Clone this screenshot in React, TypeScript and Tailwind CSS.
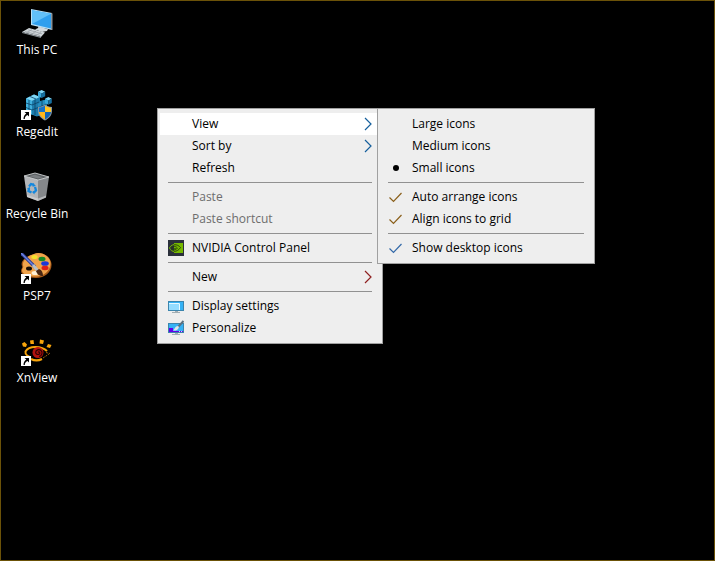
import type { ReactNode } from 'react';

function ShortcutArrow() {
  return (
    <g>
      <rect x="0" y="21" width="10" height="10" fill="#fff" />
      <path d="M3.500 23H8v4.500l-1.500-1.500c-2 1-2.700 2-2.700 4H2.500c0-2.500 1-4.300 2.800-5.500z" fill="#000" />
    </g>
  );
}

function ThisPcIcon() {
  return (
    <svg viewBox="0 0 32 32" className="size-8" aria-hidden="true">
      <path d="M17 19l6 1.500v2l-6-1z" fill="#9aa5ad" />
      <path d="M14 22.500l5-2.500 8 2-1 2-5 1z" fill="#d3d9dd" />
      <path d="M10 2l21 4v17L10 18z" fill="#b9dff5" />
      <path d="M11 3.200l19 3.600v14.800L11 17z" fill="#2f9fee" />
      <path d="M11 3.200l19 3.600-19 10.200z" fill="#62c0f8" />
      <path d="M30 6l1.500.5v16.500l-1.500-.3z" fill="#8a9298" />
      <path d="M1 25l7-4 16 4.500-4 4.500z" fill="#cfd5d9" />
      <path d="M4 24.500l15 4M7 22.800l14 4M5 26l6-3.500M10 27.300l5-3M15 28.500l5-3" stroke="#8e969c" strokeWidth=".6" />
      <path d="M1 25v1l19 5v-1z" fill="#858d93" />
    </svg>
  );
}

function Cube({ x, y, s }: { x: number; y: number; s: number }) {
  return (
    <g transform={`translate(${x} ${y}) scale(${s})`}>
      <path d="M0 2l4-2 4 2-4 2z" fill="#7fd6f4" />
      <path d="M0 2l4 2v5l-4-2z" fill="#38a9dc" />
      <path d="M8 2l-4 2v5l4-2z" fill="#156f9f" />
    </g>
  );
}

function RegeditIcon() {
  return (
    <svg viewBox="0 0 32 32" className="size-8" aria-hidden="true">
      <path d="M5 9.500l8-4 6 2.500v4l7-1.500v12l-10 5-11-4z" fill="#1b86b8" />
      <path d="M5 9.500l8-4 6 2.500-8 4z" fill="#7fd6f4" />
      <path d="M5 9.500l6 2.500v13.500l-6-2z" fill="#3fb0de" />
      <path d="M11 12l8-4v6l-2 1v12l-6-1.500z" fill="#1d7cac" />
      <path d="M17 15l4-3 5-2v13l-9 4z" fill="#258fc2" />
      <path d="M5 14l6 2 7-3M5 18.500l6 2.500 15-6M8 11v13M14 10.500V26M21 12v13M9 7.500l6 2.500" fill="none" stroke="#0b4366" strokeWidth=".8" />
      <Cube x={17} y={1} s={0.9} />
      <Cube x={24} y={8} s={0.85} />
      <path d="M24 15.500c-2 1.500-4 2.200-7 2.500v4c0 4.500 3 7.500 7 9.500 4-2 7-5 7-9.500v-4c-3-.3-5-1-7-2.500z" fill="#8795a0" />
      <path d="M24 16.800c-2 1-3.500 1.700-6 2V23h6z" fill="#1673c9" />
      <path d="M24 16.800c2 1 3.500 1.700 6 2V23h-6z" fill="#ffc526" />
      <path d="M18 23h6v7.400c-3.300-1.700-5.700-4-6-7.400z" fill="#ffb71b" />
      <path d="M30 23h-6v7.400c3.300-1.700 5.700-4 6-7.400z" fill="#1264b5" />
      <ShortcutArrow />
    </svg>
  );
}

function RecycleBinIcon() {
  return (
    <svg viewBox="0 0 32 32" className="size-8" aria-hidden="true">
      <path d="M3 5l14 3.500v21.500l-11-4z" fill="#b4b6b9" />
      <path d="M28 6l-11 2.500v21.500l8-3.500z" fill="#85888b" />
      <path d="M6 24l11 3.500 8-3v2L17 30 6 26z" fill="#d5d7d9" opacity=".6" />
      <path d="M3 5l11-3 14 4-11 3z" fill="#5d6164" stroke="#cfd2d4" strokeWidth=".9" />
      <path d="M8 5.300l6-1.600 8 2.500-5 1.300z" fill="#7b7f82" />
      <g fill="none" stroke="#1387de" strokeWidth="2.300">
        <path d="M8 15.500l2-2.500 3 .8" />
        <path d="M14 16l1 3.500-2 2" />
        <path d="M10.500 21.500l-3-1.500.5-3" />
      </g>
      <path d="M12 12l3 3-3.500.8zM13.500 19.500v4L11 21zM6 17.500l3-1.500v3z" fill="#1387de" />
    </svg>
  );
}

function PaintIcon() {
  return (
    <svg viewBox="0 0 32 32" className="size-8" aria-hidden="true">
      <path d="M13 1C20-2 30 3 30.500 11S24 25 15 25C7 25 0 22 0 18c0-2 2-3 1-5C-1 8 5 3 13 1z" fill="#a85a18" />
      <path d="M13 1C20-2 29 3 29.500 10S23 23.500 15 23.500 1 21 1 17.500c0-2 2-3 1-5C1 8 6 3 13 1z" fill="#f0a34b" />
      <ellipse cx="8" cy="15.500" rx="3" ry="2" fill="#160c05" />
      <ellipse cx="13.500" cy="4" rx="3.200" ry="2" fill="#f4e02c" />
      <ellipse cx="21" cy="6" rx="3.500" ry="2.200" fill="#168b25" />
      <ellipse cx="24" cy="10.500" rx="3.800" ry="2.300" fill="#1b38d8" />
      <ellipse cx="24" cy="15" rx="3.500" ry="2.200" fill="#df1f16" />
      <ellipse cx="14" cy="20" rx="3.500" ry="2" fill="#fff0d5" />
      <path d="M0 0l14 14" stroke="#263690" strokeWidth="3.200" />
      <path d="M0 0l13 13" stroke="#7185df" strokeWidth="1.400" />
      <path d="M12 12l5 6" stroke="#b9c0c8" strokeWidth="3" />
      <path d="M15 18l3-2c3 1 4 4 4 7-4 0-6-2-7-5z" fill="#4a2713" />
      <ShortcutArrow />
    </svg>
  );
}

function XnViewIcon() {
  return (
    <svg viewBox="0 0 32 32" className="size-8" aria-hidden="true">
      <g fill="#f7a40b">
        <path d="M1 8.500L3.500 7 6 9.500l-1 2.500-3-.5z" />
        <path d="M9 5.500l3.500-.5.5 4H9.500z" />
        <path d="M19 4.500l4 1-1 3.500-3.500-.5z" />
        <path d="M27 9l3.500 1-1.500 3-3.500-1z" />
      </g>
      <path d="M26 16C21 11 8 10 4.500 16.500 4 19 7 21.500 10 22.500" fill="none" stroke="#f7a40b" strokeWidth="2" />
      <path d="M10 24c4 2 8 1.500 11 0" fill="none" stroke="#f7a40b" strokeWidth="2.200" />
      <path d="M22 23l6-4M25 17.500l4 1" stroke="#9b5d0b" strokeWidth="1" strokeDasharray="2 1" />
      <circle cx="17" cy="17.500" r="5.500" fill="#b3120f" />
      <path d="M17 17.500c1-1.500 2.500 0 1.500 1.300s-4 .7-3.800-1.600 3.300-3.500 5.300-1.700 1 5.500-2 6" fill="none" stroke="#300202" strokeWidth="1.200" />
      <ShortcutArrow />
    </svg>
  );
}

function NvidiaIcon() {
  return (
    <svg viewBox="0 0 16 16" className="size-4" aria-hidden="true">
      <rect width="16" height="16" fill="#2b303b" />
      <path d="M6 3h9v10H6z" fill="#76b900" />
      <path d="M6 4.500C3.500 5 1.500 7 1.500 8c1 2.500 3 3.500 5 3.500" fill="none" stroke="#76b900" />
      <path d="M6 4.800c3-.4 5 1 6.500 2.700-1.500 2.500-4 4-6.500 3.800M6 6.500C4 7 3.500 8 3.800 8.500 5 10 7.500 10.500 9.500 8 8 6.500 7 6.300 6 6.500M6 8.500c1 .4 1.500 0 2-.5" fill="none" stroke="#26400a" strokeWidth=".9" />
    </svg>
  );
}

function DisplayIcon() {
  return (
    <svg viewBox="0 0 16 16" className="size-4" aria-hidden="true">
      <rect x=".5" y="3.500" width="15" height="9" fill="#35b2f5" stroke="#3c85ad" />
      <path d="M1 6h10v6H1z" fill="#94dcff" />
      <path d="M1 5.500h10.500V12" fill="none" stroke="#e9f9ff" />
      <path d="M7 13h3v1H7zM4 14h8v1H4z" fill="#a2aeb4" />
    </svg>
  );
}

function PersonalizeIcon() {
  return (
    <svg viewBox="0 0 16 16" className="size-4" aria-hidden="true">
      <rect x=".5" y="3.500" width="15" height="9" fill="#35b2f5" stroke="#3c85ad" />
      <path d="M1 8h4v3h10v1H1z" fill="#6200e8" />
      <path d="M11 11h1v1h-1zM13 11h1v1h-1z" fill="#d8c4ff" />
      <path d="M15.500 1L10 7" stroke="#5c7180" strokeWidth="2" />
      <path d="M10 6c-3 0-3 3-5 4.500 3 .5 5-.5 6-3.500z" fill="#dfe6ea" />
      <path d="M7 13h3v1H7zM4 14h8v1H4z" fill="#a2aeb4" />
    </svg>
  );
}

function Chevron({ color }: { color: string }) {
  return (
    <svg viewBox="0 0 8 14" className="ml-auto h-3.5 w-2" fill="none" stroke={color} strokeWidth="1.200" aria-hidden="true">
      <path d="M1 1l6 6-6 6" />
    </svg>
  );
}

function Separator() {
  return (
    <div role="separator" className="px-2 py-[3px]">
      <div className="h-px bg-[#919191]" />
    </div>
  );
}

type ItemProps = { label: string; icon?: ReactNode; arrow?: string; active?: boolean; disabled?: boolean };

function MenuItem({ label, icon, arrow, active, disabled }: ItemProps) {
  return (
    <button
      type="button"
      role="menuitem"
      disabled={disabled}
      aria-haspopup={arrow ? 'menu' : undefined}
      className={`flex h-[22px] w-full items-center gap-2 px-2 text-left disabled:text-[#6d6d6d] ${active ? 'bg-white' : 'hover:bg-white'}`}
    >
      <span className="size-4">{icon}</span>
      <span>{label}</span>
      {arrow && <Chevron color={arrow} />}
    </button>
  );
}

type OptionProps = { label: string; kind: 'radio' | 'checkbox'; checked?: boolean; tick?: string };

function MenuOption({ label, kind, checked, tick }: OptionProps) {
  return (
    <label className="flex h-[22px] items-center gap-2 px-2 hover:bg-white">
      <span className="grid size-4">
        <input
          type={kind}
          name={kind === 'radio' ? 'icon-size' : undefined}
          defaultChecked={checked}
          className="peer size-4 appearance-none [grid-area:1/1]"
        />
        <svg viewBox="0 0 16 16" className="pointer-events-none invisible size-4 [grid-area:1/1] peer-checked:visible" aria-hidden="true">
          {kind === 'radio' ? (
            <circle cx="8" cy="8" r="3" fill="#000" />
          ) : (
            <path d="M1.500 8.500l4 4 8-8.500" fill="none" stroke={tick} strokeWidth="1.200" />
          )}
        </svg>
      </span>
      <span>{label}</span>
    </label>
  );
}

const shortcuts = [
  { label: 'This PC', icon: <ThisPcIcon /> },
  { label: 'Regedit', icon: <RegeditIcon /> },
  { label: 'Recycle Bin', icon: <RecycleBinIcon /> },
  { label: 'PSP7', icon: <PaintIcon /> },
  { label: 'XnView', icon: <XnViewIcon /> },
];

const panel = 'border border-[#a0a0a0] bg-[#eeeeee] px-0.5 py-1 text-black';

export default function App() {
  return (
    <main className="relative min-h-screen border border-[#6b5208] bg-black font-['Open_Sans','Noto_Sans',sans-serif] text-[12px] leading-5">
      <nav aria-label="Desktop" className="flex w-18 flex-col gap-[29px] pt-1.5 text-white">
        {shortcuts.map((s) => (
          <button key={s.label} type="button" className="flex flex-col items-center gap-px whitespace-nowrap">
            {s.icon}
            <span>{s.label}</span>
          </button>
        ))}
      </nav>

      <div role="menu" aria-label="Desktop menu" className={`absolute top-[107px] left-[156px] w-[226px] ${panel}`}>
        <MenuItem label="View" arrow="#155f9c" active />
        <MenuItem label="Sort by" arrow="#155f9c" />
        <MenuItem label="Refresh" />
        <Separator />
        <MenuItem label="Paste" disabled />
        <MenuItem label="Paste shortcut" disabled />
        <Separator />
        <MenuItem label="NVIDIA Control Panel" icon={<NvidiaIcon />} />
        <Separator />
        <MenuItem label="New" arrow="#8f2020" />
        <Separator />
        <MenuItem label="Display settings" icon={<DisplayIcon />} />
        <MenuItem label="Personalize" icon={<PersonalizeIcon />} />
      </div>

      <div role="menu" aria-label="View" className={`absolute top-[107px] left-[376px] w-[218px] ${panel}`}>
        <MenuOption kind="radio" label="Large icons" />
        <MenuOption kind="radio" label="Medium icons" />
        <MenuOption kind="radio" label="Small icons" checked />
        <Separator />
        <MenuOption kind="checkbox" label="Auto arrange icons" tick="#8a5f1a" checked />
        <MenuOption kind="checkbox" label="Align icons to grid" tick="#8a5f1a" checked />
        <Separator />
        <MenuOption kind="checkbox" label="Show desktop icons" tick="#3369a8" checked />
      </div>
    </main>
  );
}
